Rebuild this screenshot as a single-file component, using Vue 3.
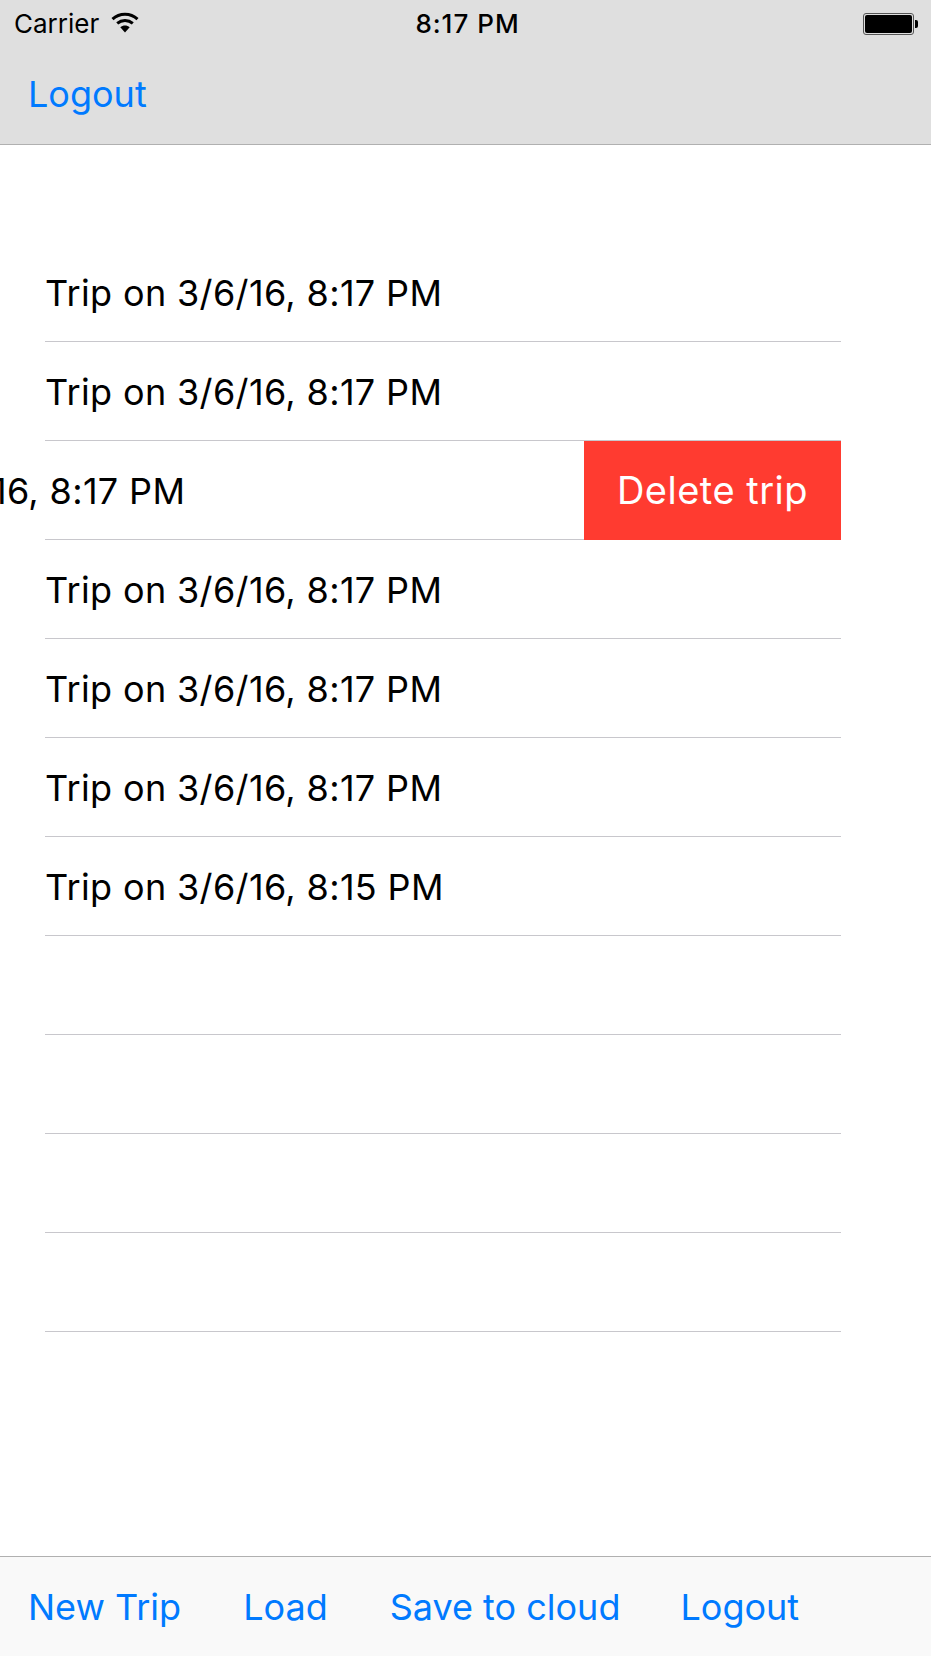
<template>
  <div class="screen">
    <header class="top-bar">
      <div class="status-bar">
        <div class="status-left">
          <span class="carrier">Carrier</span>
          <svg class="wifi" width="28" height="21" viewBox="0 0 28 21">
            <path d="M1.5 7.2C8.6 .6 19.4 .6 26.5 7.2" fill="none" stroke="#000" stroke-width="3" />
            <path d="M6.2 11.4C10.8 7.6 17.2 7.6 21.8 11.4" fill="none" stroke="#000" stroke-width="3" />
            <path d="M9.3 15.2C12 13 16 13 18.7 15.2L14 20.5Z" fill="#000" />
          </svg>
        </div>
        <span class="time">8:17 PM</span>
        <div class="battery">
          <div class="battery-body"><div class="battery-fill" /></div>
          <div class="battery-nub" />
        </div>
      </div>
      <div class="nav-row">
        <a class="link">Logout</a>
      </div>
    </header>

    <main class="list">
      <div v-for="(trip, i) in trips" :key="i" class="row">
        <template v-if="trip.swiped">
          <span class="trip swiped">{{ trip.label }}</span>
          <div class="delete">Delete trip</div>
        </template>
        <span v-else class="trip">{{ trip.label }}</span>
      </div>
    </main>

    <footer class="toolbar">
      <a class="link">New Trip</a>
      <a class="link">Load</a>
      <a class="link">Save to cloud</a>
      <a class="link">Logout</a>
    </footer>
  </div>
</template>

<script setup>
const trips = [
  { label: 'Trip on 3/6/16, 8:17 PM' },
  { label: 'Trip on 3/6/16, 8:17 PM' },
  { label: 'Trip on 3/6/16, 8:17 PM', swiped: true },
  { label: 'Trip on 3/6/16, 8:17 PM' },
  { label: 'Trip on 3/6/16, 8:17 PM' },
  { label: 'Trip on 3/6/16, 8:17 PM' },
  { label: 'Trip on 3/6/16, 8:15 PM' },
  { label: '' },
  { label: '' },
  { label: '' },
  { label: '' }
]
</script>

<style>
html,
body {
  margin: 0;
  background: #fff;
}
</style>

<style scoped>
.screen {
  width: 931px;
  height: 1656px;
  display: flex;
  flex-direction: column;
  overflow: hidden;
  background: #fff;
  font-family: Inter, "Liberation Sans", sans-serif;
}

.top-bar {
  height: 144px;
  flex-shrink: 0;
  background: #dfdfdf;
  border-bottom: 1px solid #b0b0b0;
}

.status-bar {
  height: 47px;
  display: grid;
  grid-template-columns: 1fr auto 1fr;
  align-items: center;
  padding: 0 13px 0 14px;
  color: #000;
}

.status-left {
  display: flex;
  align-items: center;
  gap: 12px;
}

.carrier {
  font-size: 26px;
}

.wifi {
  margin-top: -2px;
}

.time {
  margin-left: 3px;
  font-size: 26px;
  font-weight: 500;
  letter-spacing: 1px;
}

.battery {
  justify-self: end;
  display: flex;
  align-items: center;
  gap: 1px;
}

.battery-body {
  width: 47px;
  height: 18px;
  padding: 1px;
  border: 1px solid #555;
  border-radius: 3px;
}

.battery-fill {
  height: 100%;
  background: #000;
  border-radius: 2px;
}

.battery-nub {
  width: 3px;
  height: 8px;
  background: #000;
  border-radius: 0 2px 2px 0;
}

.nav-row {
  height: 97px;
  display: flex;
  align-items: center;
  padding: 0 0 3px 28px;
  box-sizing: border-box;
}

.link {
  color: #007aff;
  font-size: 36px;
}

.list {
  flex: 1;
  padding: 98px 90px 0 45px;
}

.row {
  height: 98px;
  display: flex;
  align-items: center;
  justify-content: space-between;
  border-bottom: 1px solid #c8c7cc;
  white-space: nowrap;
}

.trip {
  margin-top: 2px;
  font-size: 36px;
  letter-spacing: 0.35px;
  color: #000;
}

.swiped {
  margin-left: -257px;
}

.delete {
  flex-shrink: 0;
  align-self: stretch;
  width: 257px;
  margin-bottom: -1px;
  padding-bottom: 2px;
  box-sizing: border-box;
  display: flex;
  align-items: center;
  justify-content: center;
  background: #ff3b30;
  color: #fff;
  font-size: 38px;
  letter-spacing: 0.5px;
}

.toolbar {
  height: 99px;
  flex-shrink: 0;
  display: flex;
  align-items: center;
  gap: 62px;
  padding-left: 28px;
  background: #f9f9f9;
  border-top: 1px solid #b0b0b0;
}

.toolbar .link:last-child {
  margin-left: -2px;
}
</style>
